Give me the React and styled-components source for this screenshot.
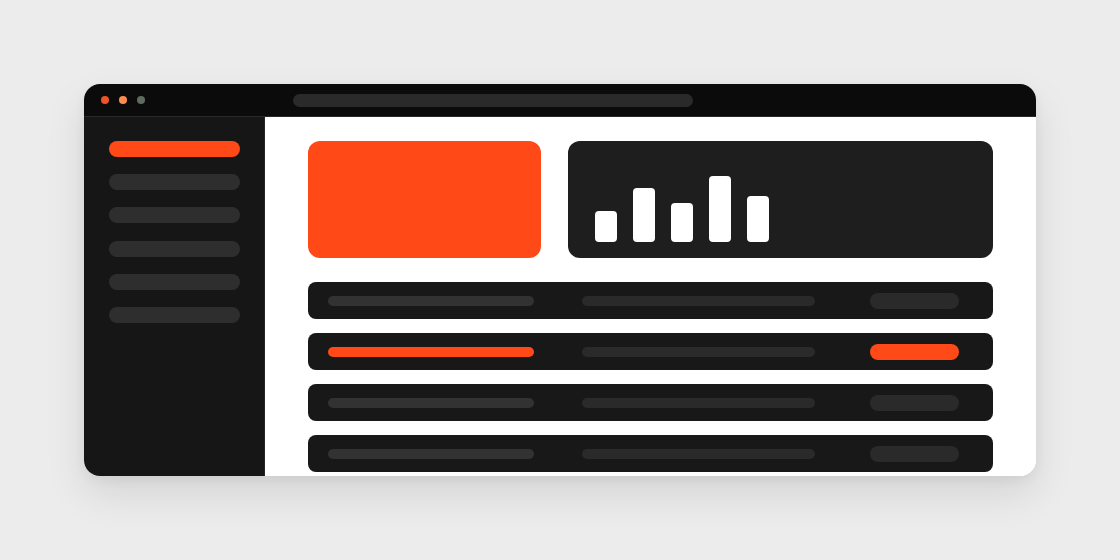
import React from "react";
import styled, { createGlobalStyle } from "styled-components";

const ORANGE = "#ff4a17";

const Global = createGlobalStyle`
  html, body { margin: 0; padding: 0; background: #ececec; font-family: "Inter", "Liberation Sans", sans-serif; }
  #root { width: 1120px; height: 560px; }
`;

const Stage = styled.div`
  width: 1120px;
  height: 560px;
  display: flex;
  align-items: center;
  justify-content: center;
  background: #ececec;
`;

const Window = styled.div`
  width: 952px;
  height: 392px;
  border-radius: 16px;
  overflow: hidden;
  display: flex;
  flex-direction: column;
  background: #fff;
  box-shadow: 0 18px 40px rgba(0, 0, 0, 0.10), 0 4px 12px rgba(0, 0, 0, 0.05);
`;

const TitleBar = styled.div`
  height: 32px;
  flex: none;
  background: #0b0b0b;
  border-bottom: 1px solid #2a2a2a;
  display: flex;
  align-items: center;
  padding-left: 17px;
`;

const Dots = styled.div`
  display: flex;
  gap: 10px;
`;

const Dot = styled.span`
  width: 8px;
  height: 8px;
  border-radius: 50%;
  background: ${(p) => p.$color};
`;

const UrlBar = styled.div`
  margin-left: 148px;
  width: 400px;
  height: 13px;
  border-radius: 7px;
  background: #2a2a2a;
`;

const Body = styled.div`
  flex: 1;
  display: flex;
  min-height: 0;
`;

const Sidebar = styled.nav`
  width: 181px;
  flex: none;
  background: #161616;
  border-right: 1px solid #262626;
  padding: 24px 25px 0 25px;
  box-sizing: border-box;
  display: flex;
  flex-direction: column;
  gap: 17.2px;
`;

const NavItem = styled.div`
  width: 131px;
  height: 16px;
  border-radius: 8px;
  background: ${(p) => (p.$active ? ORANGE : "#2e2e2e")};
`;

const Main = styled.main`
  flex: 1;
  background: #fff;
  padding: 24px 43px 0 43px;
  overflow: hidden;
  display: flex;
  flex-direction: column;
  gap: 24px;
`;

const TopRow = styled.div`
  display: grid;
  grid-template-columns: 233px 1fr;
  gap: 27px;
  height: 117px;
  flex: none;
`;

const HeroCard = styled.div`
  background: ${ORANGE};
  border-radius: 12px;
`;

const ChartCard = styled.div`
  background: #1e1e1e;
  border-radius: 12px;
  display: flex;
  align-items: flex-end;
  gap: 16px;
  padding: 0 27px 16px 27px;
`;

const Bar = styled.div`
  width: 22px;
  border-radius: 4px;
  background: #fff;
`;

const Rows = styled.div`
  display: flex;
  flex-direction: column;
  gap: 14px;
`;

const Row = styled.div`
  height: 37px;
  flex: none;
  background: #181818;
  border-radius: 8px;
  display: flex;
  align-items: center;
  padding: 0 34px 0 20px;
`;

const Line = styled.div`
  height: 10px;
  border-radius: 5px;
  width: ${(p) => p.$w}px;
  margin-left: ${(p) => p.$ml || 0}px;
  background: ${(p) => p.$color};
`;

const Pill = styled.div`
  margin-left: auto;
  width: 89px;
  height: 16px;
  border-radius: 8px;
  background: ${(p) => (p.$active ? ORANGE : "#2a2a2a")};
`;

const bars = [31, 54, 39, 66, 46];
const rows = [false, true, false, false];

export default function App() {
  return (
    <>
      <Global />
      <Stage>
        <Window>
          <TitleBar>
            <Dots>
              <Dot $color="#f0522a" />
              <Dot $color="#ff8d50" />
              <Dot $color="#5e6c60" />
            </Dots>
            <UrlBar />
          </TitleBar>
          <Body>
            <Sidebar>
              {[true, false, false, false, false, false].map((a, i) => (
                <NavItem key={i} $active={a} />
              ))}
            </Sidebar>
            <Main>
              <TopRow>
                <HeroCard />
                <ChartCard>
                  {bars.map((h, i) => (
                    <Bar key={i} style={{ height: h }} />
                  ))}
                </ChartCard>
              </TopRow>
              <Rows>
                {rows.map((a, i) => (
                  <Row key={i}>
                    <Line $w={206} $color={a ? ORANGE : "#323232"} />
                    <Line $w={233} $ml={48} $color="#2a2a2a" />
                    <Pill $active={a} />
                  </Row>
                ))}
              </Rows>
            </Main>
          </Body>
        </Window>
      </Stage>
    </>
  );
}
